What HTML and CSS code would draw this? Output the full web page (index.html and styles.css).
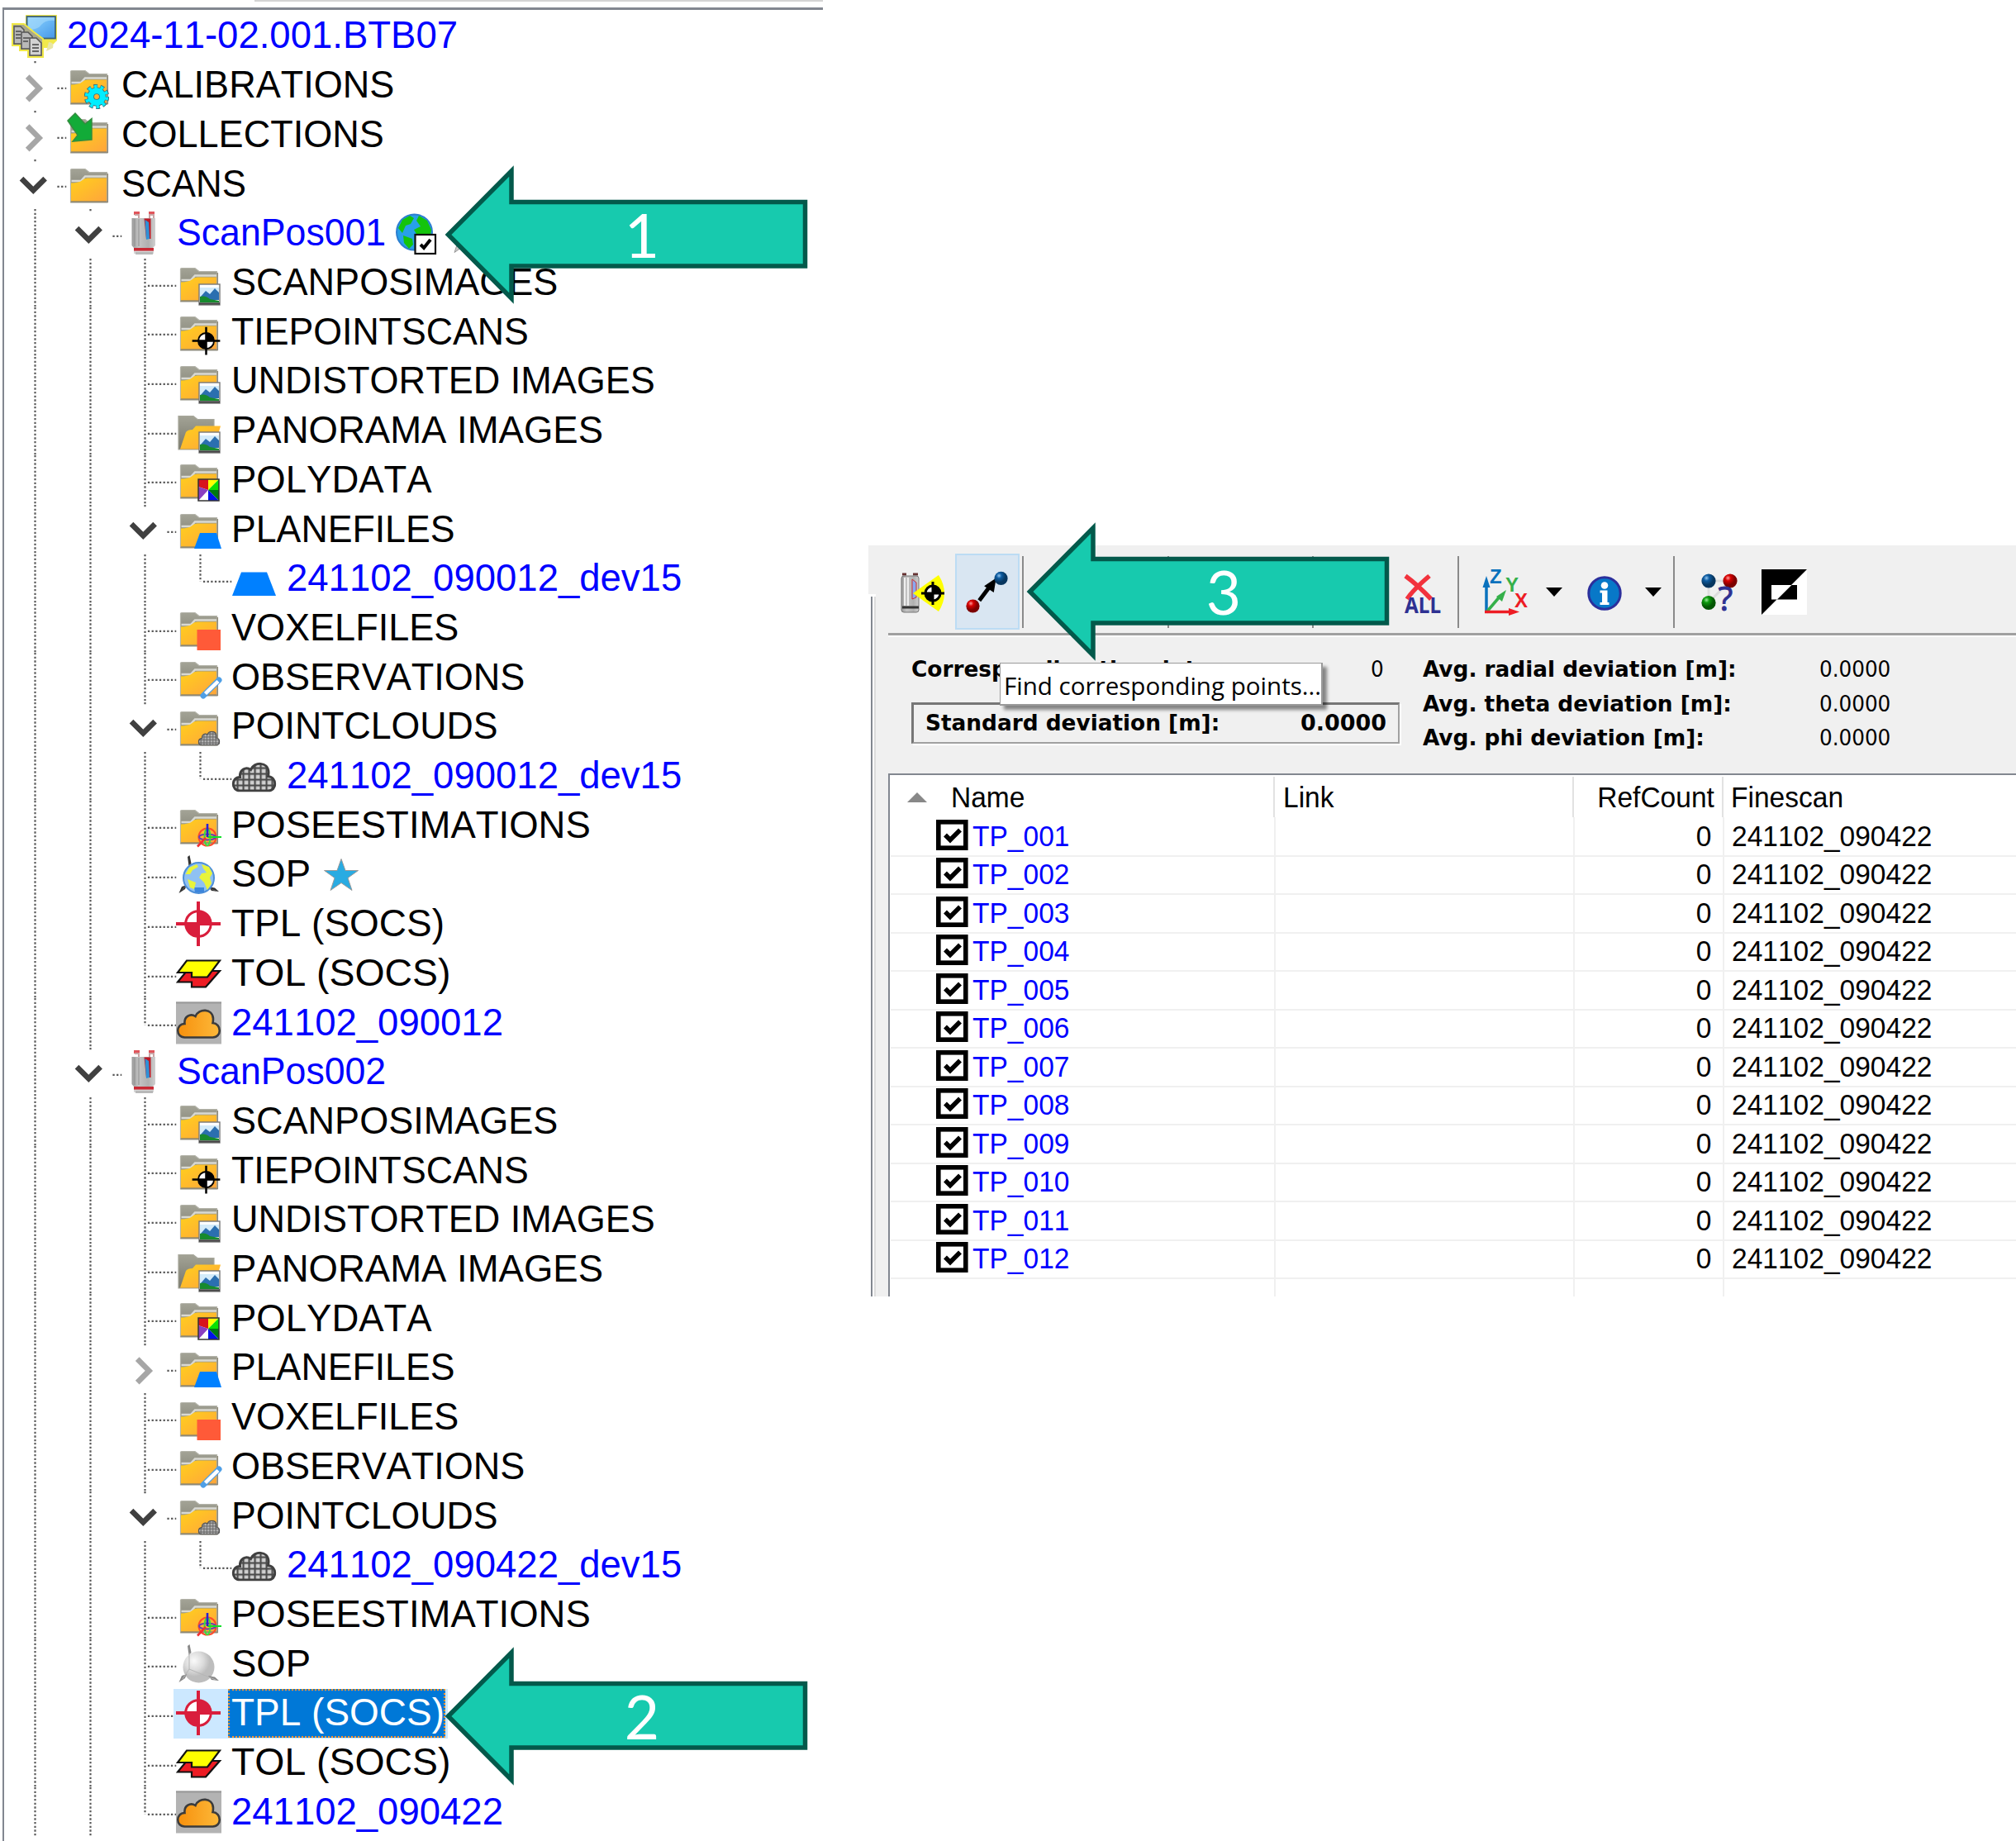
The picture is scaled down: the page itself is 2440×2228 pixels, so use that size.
FILE: index.html
```html
<!DOCTYPE html>
<html lang="en">
<head>
<meta charset="utf-8">
<title>2024-11-02.001.BTB07</title>
<link rel="stylesheet" href="styles.css">
</head>
<body>
<svg class="defs" width="0" height="0">
  <defs>
    <linearGradient id="gold" x1="0" y1="0" x2="1" y2="1"><stop offset="0" stop-color="#ffd01c"/><stop offset="1" stop-color="#ffa53c"/></linearGradient>
    <linearGradient id="gold2"><stop offset="0" stop-color="#f7900c"/><stop offset="1" stop-color="#fdb93a"/></linearGradient>
    <linearGradient id="tab" x1="0" y1="0" x2="0" y2="1"><stop offset="0" stop-color="#a3a396"/><stop offset="1" stop-color="#77776a"/></linearGradient>
    <linearGradient id="metal"><stop offset="0" stop-color="#9a9a9a"/><stop offset=".3" stop-color="#c4c4c4"/><stop offset=".7" stop-color="#b0b0b0"/><stop offset="1" stop-color="#cfcfcf"/></linearGradient>
    <linearGradient id="screen" x1="0" y1="0" x2="1" y2="1"><stop offset="0" stop-color="#8fd0fb"/><stop offset=".5" stop-color="#6bb8f5"/><stop offset="1" stop-color="#4596e6"/></linearGradient>
    <radialGradient id="ballR" cx=".35" cy=".3"><stop offset="0" stop-color="#ff9a9a"/><stop offset=".4" stop-color="#d60000"/><stop offset="1" stop-color="#7c0000"/></radialGradient>
    <radialGradient id="ballB" cx=".35" cy=".3"><stop offset="0" stop-color="#8fc4ef"/><stop offset=".4" stop-color="#0d5ba0"/><stop offset="1" stop-color="#07365f"/></radialGradient>
    <radialGradient id="ballG" cx=".35" cy=".3"><stop offset="0" stop-color="#9be89b"/><stop offset=".4" stop-color="#0c9a0c"/><stop offset="1" stop-color="#045604"/></radialGradient>
    <radialGradient id="ballW" cx=".35" cy=".3"><stop offset="0" stop-color="#fafafa"/><stop offset=".6" stop-color="#dcdcdc"/><stop offset="1" stop-color="#bdbdbd"/></radialGradient>
    <pattern id="mesh" width="7" height="7" patternUnits="userSpaceOnUse"><rect width="7" height="7" fill="#4c4c4c"/><rect x="1.2" y="1.2" width="4.8" height="4.8" fill="#d0d0d0"/></pattern>
    <pattern id="meshS" width="7.2" height="7.2" patternUnits="userSpaceOnUse"><rect width="7.2" height="7.2" fill="#666"/><rect x="1.4" y="1.4" width="5" height="5" fill="#b8b8b8"/></pattern>

    <symbol id="v" viewBox="0 0 66.5 59.71"><path class="dots" d="M28.5 0V59.71"/></symbol>
    <symbol id="tee" viewBox="0 0 66.5 59.71"><path class="dots" d="M28.5 0V59.71M31.9 32.9H66.5"/></symbol>
    <symbol id="ell" viewBox="0 0 66.5 59.71"><path class="dots" d="M28.5 0V33M31.9 32.9H66.5"/></symbol>
    <symbol id="open" viewBox="0 0 66.5 59.71"><path class="dots" d="M28.5 0V2.3M55.4 32.9H66.5"/><path d="M12 23.2L26.3 37.4L40.6 23.2" fill="none" stroke="#404040" stroke-width="6.6"/></symbol>
    <symbol id="shut" viewBox="0 0 66.5 59.71"><path class="dots" d="M28.5 0V2.3M55.4 32.9H66.5"/><path d="M19.2 18.7L33.4 32.9L19.2 47.1" fill="none" stroke="#a6a6a6" stroke-width="6.6"/></symbol>

    <symbol id="folder" viewBox="0 0 56 56">
      <path d="M5.5 50V10.5Q5.5 9.5 7 9.5H23L28 13.5H49.500V50Z" fill="url(#tab)" stroke="#b4b4aa" stroke-width="1.200"/>
      <path d="M6.500 24H18L23 18.500H49" fill="none" stroke="#d9d9d2" stroke-width="2.500"/>
      <path d="M6 26.500Q16 26 19 23.500Q22 20.500 26 20.500H49V48.500H6Z" fill="url(#gold)"/>
      <path d="M5.500 49.600H50.300V15" fill="none" stroke="#8f8a7a" stroke-width="1.500"/>
    </symbol>
    <symbol id="folderOpen" viewBox="0 0 56 56">
      <path d="M3 50V9.500H21L26 13.500H46V50Z" fill="url(#tab)" stroke="#a8a89c" stroke-width="1.200"/>
      <path d="M5 49.500L12 29Q14 26 20 26L24 21.500H54L46 49.500Z" fill="url(#gold)"/>
    </symbol>
    <symbol id="pic" viewBox="0 0 56 56">
      <rect x="28" y="29" width="25" height="25" fill="#fff" stroke="#777" stroke-width="1.400"/>
      <path d="M29 33H52V46H29Z" fill="#d3ebfa"/><path d="M29 45L36 37L41 41L47 34L52 39V48H29Z" fill="#2b6fb0"/>
      <path d="M29 44Q36 42 41 47L52 49V51H29Z" fill="#178a2e"/><path d="M28 52.500H53" stroke="#444" stroke-width="2.500"/>
    </symbol>
    <symbol id="cross" viewBox="-28 -28 56 56">
      <circle r="15.300" fill="#fff" stroke="currentColor" stroke-width="3"/><path d="M0 0V-15A15 15 0 0 1 15 0ZM0 0V15A15 15 0 0 1 -15 0Z" fill="currentColor"/>
      <path d="M0-27V27M-27 0H27" stroke="currentColor" stroke-width="4"/>
    </symbol>
    <symbol id="cloud" viewBox="0 0 54 36"><path d="M10 34.500C-1 34.500-1 18 10 18C9 9 17 5 23 9C27-1 44-1 44.500 12C44.500 14 44.500 15 44 17C55 18 55 34.500 44 34.500Z"/></symbol>
    <symbol id="gear" viewBox="-14 -14 28 28"><circle r="11.500" fill="none" stroke="#38727d" stroke-width="5.500" stroke-dasharray="4.200 3.030"/><circle r="6.800" fill="none" stroke="#38727d" stroke-width="8"/><circle r="11.200" fill="none" stroke="#0ef" stroke-width="4.200" stroke-dasharray="3.200 3.840" stroke-dashoffset="-.5"/><circle r="6.800" fill="none" stroke="#0ef" stroke-width="6.400"/></symbol>
    <symbol id="scanner" viewBox="0 0 56 56">
      <path d="M15 3H22M33 3H40" stroke="#e0555b" stroke-width="4"/><path d="M16 5H21V10H34V5H39V9" fill="none" stroke="#c9a5a5" stroke-width="2"/>
      <path d="M12.500 9H41V42L38 45H15L12.500 42Z" fill="url(#metal)"/><path d="M16 10V43M21 10V43" stroke="#8d8d8d" stroke-width="1"/>
      <path d="M27.500 9.500H35.500V34H30Z" fill="#c01825"/><path d="M28.500 11L33 14L34 34L30 35Z" fill="#2f90d6"/>
      <path d="M15 45H39V52H15Z" fill="#d6d6d6"/><path d="M15 46.800H39" stroke="#c92a35" stroke-width="3.600"/><path d="M17 51.500H38" stroke="#b9b9b9" stroke-width="3"/>
    </symbol>
    <symbol id="axes" viewBox="0 0 56 56"><path d="M15.500 17L14 6L16.500 4L18.500 14ZM3.500 50L7 42L13 40L11 45ZM52 48L43 47L39 42L47 43.500Z"/><path d="M16 14V34L8 46M16 34L48 47" fill="none" stroke="currentColor"/></symbol>
    <symbol id="star" viewBox="0 0 44 42"><path d="M22 1.500L27 15.500H42.500L30 24.500L35 39.500L22 30.500L9 39.500L14 24.500L1.500 15.500H17Z" stroke="#999" stroke-width="1"/></symbol>

    <symbol id="i-root" viewBox="0 0 56 56">
      <path d="M17 2H55V33L46 42H17Z" fill="#f1e94b"/><path d="M45 35Q52 35 50 42L42 46" fill="#e9e6a5"/>
      <rect x="18.500" y="4" width="34.500" height="26.500" fill="url(#screen)" stroke="#3f6272" stroke-width="1.800"/><path d="M20 20Q32 20 36 14Q41 8 52 9V5H20Z" fill="#a9dcfb" opacity=".6"/>
      <path d="M1 13H15L26 22L38 31V53H20V45H10V39H1Z" fill="#aaa88c" stroke="#f0e846" stroke-width="2"/>
      <g fill="#b9b9b9" stroke="#555" stroke-width="1.500"><path d="M3 16H11L15 20V37H3Z"/><path d="M12 23H20L25 28V43H12Z"/><path d="M22 30H30L36 36V51H22Z" fill="#d2d2d2"/></g>
      <path d="M5 22H12M5 26H12M5 30H11M14 30H22M14 34H20M25 38H33M25 42H33M25 46H33" stroke="#666" stroke-width="2"/>
    </symbol>
    <symbol id="i-cal" viewBox="0 0 56 56"><use href="#folder"/><use href="#gear" x="22" y="26" width="30" height="30"/></symbol>
    <symbol id="i-col" viewBox="0 0 56 56"><use href="#folder"/><path d="M2 11L11 2L23 15L31 8.500V34L8 36L14 28.500Z" fill="#12ab38" stroke="#338d3e" stroke-width="1.500"/></symbol>
    <symbol id="i-folder" viewBox="0 0 56 56"><use href="#folder"/></symbol>
    <symbol id="i-pic" viewBox="0 0 56 56"><use href="#folder"/><use href="#pic"/></symbol>
    <symbol id="i-pan" viewBox="0 0 56 56"><use href="#folderOpen"/><use href="#pic"/></symbol>
    <symbol id="i-tie" viewBox="0 0 56 56"><use href="#folder"/><use href="#cross" x="19" y="21" width="35" height="35" color="#000"/></symbol>
    <symbol id="i-poly" viewBox="0 0 56 56"><use href="#folder"/>
      <g transform="translate(27 27)"><rect width="25" height="26" fill="#fff"/><path d="M0 0H12V13L0 9Z" fill="#d8131c"/><path d="M12 0H25L12 13Z" fill="#ff0"/><path d="M25 0V13H12Z" fill="#0be000"/><path d="M25 13V26L12 13Z" fill="#007812"/><path d="M12 13L25 26H12Z" fill="#0010e8"/><path d="M0 9L12 13L0 26Z" fill="#8a3fc0"/><rect width="25" height="26" fill="none" stroke="#333" stroke-width="1.500"/></g></symbol>
    <symbol id="i-planes" viewBox="0 0 56 56"><use href="#folder"/><path d="M29 32H49L55 51H22Z" fill="#0080ff"/></symbol>
    <symbol id="i-plane" viewBox="0 0 56 56"><path d="M12 19.500H43L54 48H1Z" fill="#0080ff"/></symbol>
    <symbol id="i-vox" viewBox="0 0 56 56"><use href="#folder"/><rect x="25.500" y="30" width="28.500" height="25" fill="#ff5a38"/></symbol>
    <symbol id="i-obs" viewBox="0 0 56 56"><use href="#folder"/><path d="M33 50L52 31" stroke="#4f9fe6" stroke-width="7" stroke-linecap="round"/><path d="M35.500 47.500L51 32.500" stroke="#fff" stroke-width="4.500"/></symbol>
    <symbol id="i-pcs" viewBox="0 0 56 56"><use href="#folder"/><use href="#cloud" x="26.500" y="32.500" width="27" height="18" fill="url(#meshS)" stroke="#555" stroke-width="2.500"/></symbol>
    <symbol id="i-pc" viewBox="0 0 56 56"><use href="#cloud" x=".5" y="10.500" width="54" height="36" fill="url(#mesh)" stroke="#404040" stroke-width="3"/></symbol>
    <symbol id="i-pose" viewBox="0 0 56 56"><use href="#folder"/><g fill="none" stroke-width="2"><circle cx="38" cy="42" r="10.500" stroke="#ff4a2a"/><ellipse cx="38" cy="42" rx="10" ry="3.500" stroke="#6a3fb0"/><ellipse cx="38" cy="42" rx="3.500" ry="10" stroke="#3ddc3d"/><path d="M38 42H55" stroke="#12e02a"/><path d="M38 42V26" stroke="#2a1fd0" stroke-width="2.600"/><path d="M36 43L26 53.500" stroke="#f03030" stroke-width="2.600"/></g></symbol>
    <symbol id="i-sop" viewBox="0 0 56 56"><use href="#axes" fill="#333" color="#555"/><circle cx="27.500" cy="31.500" r="18.500" fill="#8fc1f2" stroke="#4d8fd8" stroke-width="2"/><path d="M22 43H34V49H23Z" fill="#3c86dc"/><g fill="#e8f43a"><path d="M11.500 27L16 19L25 15L27 18L20 22L17 27Z"/><path d="M31 15L40 18L44 26L41 31L43 38L38 46L34 37L28 31L31 26L37 25L33 20Z"/><path d="M14 33L24 37L22 45L17 43Z"/></g></symbol>
    <symbol id="i-sopg" viewBox="0 0 56 56"><circle cx="27.500" cy="31.500" r="19" fill="url(#ballW)"/><use href="#axes" fill="#888" color="#b5b5b5"/></symbol>
    <symbol id="i-tpl" viewBox="0 0 56 56"><use href="#cross" x="-1" y="-1" width="56" height="56" color="#d91e3c"/></symbol>
    <symbol id="i-tol" viewBox="0 0 56 56"><g stroke="#111" stroke-width="2.200"><path d="M13 25H53L36 44.500H19V38.500H2Z" fill="#ed1c24"/><path d="M13 12.500H53L38 32.500H19V27H2Z" fill="#ff0"/></g></symbol>
    <symbol id="i-scan" viewBox="0 0 56 56"><rect y="2.500" width="55" height="51" fill="#b3b3b3"/><path d="M0 3.500H55" stroke="#999" stroke-width="2"/><use href="#cloud" x=".5" y="11" width="54" height="36" fill="url(#gold2)" stroke="#3c3c3c" stroke-width="2.600"/></symbol>
    <symbol id="arrow" viewBox="0 0 442 168"><path d="M4.500 84L81 7V44.500H436.500V122H81V161Z" fill="#17caae" stroke="#03594b" stroke-width="5.500"/></symbol>
    <symbol id="chk" viewBox="0 0 39 37"><rect x="2.800" y="2.800" width="33" height="31.400" fill="#fff" stroke="#000" stroke-width="5.600"/><path d="M11 18.500L17 24.500L29 12.500" fill="none" stroke="#000" stroke-width="5.500"/></symbol>
  </defs>
</svg>

<main class="page">
  <section class="project">
    <div class="tabline"></div>
    <div class="tree">
      <div class="row"><div class="node link"><svg class="icon"><use href="#i-root"/></svg><span class="label"><b>2024-11-02.001.BTB07</b></span></div></div>
      <div class="row"><svg><use href="#shut"/></svg><div class="node"><svg class="icon"><use href="#i-cal"/></svg><span class="label snug"><b>CALIBRATIONS</b></span></div></div>
      <div class="row"><svg><use href="#shut"/></svg><div class="node"><svg class="icon"><use href="#i-col"/></svg><span class="label snug"><b>COLLECTIONS</b></span></div></div>
      <div class="row"><svg><use href="#open"/></svg><div class="node"><svg class="icon"><use href="#i-folder"/></svg><span class="label narrow"><b>SCANS</b></span></div></div>

      <div class="row"><svg><use href="#v"/></svg><svg><use href="#open"/></svg><div class="node link"><svg class="icon"><use href="#scanner"/></svg><span class="label tight"><b>ScanPos001</b></span>
        <svg class="globe" viewBox="0 0 50 50"><circle cx="22.500" cy="23" r="21.500" fill="#28a0e8" stroke="#2c7ed0" stroke-width="2"/><g fill="#14c40c"><path d="M3 18L8 8L17 3L22 6L18 13L12 15L8 24Z"/><path d="M28 3L38 9L43 20L42 27H26L22 20L30 16L25 9Z"/><path d="M9 27L20 31L21 38L16 43L10 36Z"/></g><rect x="23.500" y="26" width="24.500" height="23" fill="#fff" stroke="#111" stroke-width="2.200"/><path d="M30 38L34 42L42 32" fill="none" stroke="#000" stroke-width="4"/></svg>
        <svg class="star dim"><use href="#star"/></svg></div></div>
      <div class="row"><svg><use href="#v"/></svg><svg><use href="#v"/></svg><svg><use href="#tee"/></svg><div class="node"><svg class="icon"><use href="#i-pic"/></svg><span class="label snug"><b>SCANPOSIMAGES</b></span></div></div>
      <div class="row"><svg><use href="#v"/></svg><svg><use href="#v"/></svg><svg><use href="#tee"/></svg><div class="node"><svg class="icon"><use href="#i-tie"/></svg><span class="label tight"><b>TIEPOINTSCANS</b></span></div></div>
      <div class="row"><svg><use href="#v"/></svg><svg><use href="#v"/></svg><svg><use href="#tee"/></svg><div class="node"><svg class="icon"><use href="#i-pic"/></svg><span class="label snug"><b>UNDISTORTED IMAGES</b></span></div></div>
      <div class="row"><svg><use href="#v"/></svg><svg><use href="#v"/></svg><svg><use href="#tee"/></svg><div class="node"><svg class="icon"><use href="#i-pan"/></svg><span class="label"><b>PANORAMA IMAGES</b></span></div></div>
      <div class="row"><svg><use href="#v"/></svg><svg><use href="#v"/></svg><svg><use href="#tee"/></svg><div class="node"><svg class="icon"><use href="#i-poly"/></svg><span class="label"><b>POLYDATA</b></span></div></div>
      <div class="row"><svg><use href="#v"/></svg><svg><use href="#v"/></svg><svg><use href="#open"/></svg><div class="node"><svg class="icon"><use href="#i-planes"/></svg><span class="label tight"><b>PLANEFILES</b></span></div></div>
      <div class="row"><svg><use href="#v"/></svg><svg><use href="#v"/></svg><svg><use href="#v"/></svg><svg><use href="#ell"/></svg><div class="node link"><svg class="icon"><use href="#i-plane"/></svg><span class="label"><b>241102_090012_dev15</b></span></div></div>
      <div class="row"><svg><use href="#v"/></svg><svg><use href="#v"/></svg><svg><use href="#tee"/></svg><div class="node"><svg class="icon"><use href="#i-vox"/></svg><span class="label snug"><b>VOXELFILES</b></span></div></div>
      <div class="row"><svg><use href="#v"/></svg><svg><use href="#v"/></svg><svg><use href="#tee"/></svg><div class="node"><svg class="icon"><use href="#i-obs"/></svg><span class="label snug"><b>OBSERVATIONS</b></span></div></div>
      <div class="row"><svg><use href="#v"/></svg><svg><use href="#v"/></svg><svg><use href="#open"/></svg><div class="node"><svg class="icon"><use href="#i-pcs"/></svg><span class="label tight"><b>POINTCLOUDS</b></span></div></div>
      <div class="row"><svg><use href="#v"/></svg><svg><use href="#v"/></svg><svg><use href="#v"/></svg><svg><use href="#ell"/></svg><div class="node link"><svg class="icon"><use href="#i-pc"/></svg><span class="label"><b>241102_090012_dev15</b></span></div></div>
      <div class="row"><svg><use href="#v"/></svg><svg><use href="#v"/></svg><svg><use href="#tee"/></svg><div class="node"><svg class="icon"><use href="#i-pose"/></svg><span class="label"><b>POSEESTIMATIONS</b></span></div></div>
      <div class="row"><svg><use href="#v"/></svg><svg><use href="#v"/></svg><svg><use href="#tee"/></svg><div class="node"><svg class="icon"><use href="#i-sop"/></svg><span class="label"><b>SOP</b></span><svg class="star"><use href="#star"/></svg></div></div>
      <div class="row"><svg><use href="#v"/></svg><svg><use href="#v"/></svg><svg><use href="#tee"/></svg><div class="node"><svg class="icon"><use href="#i-tpl"/></svg><span class="label wide"><b>TPL (SOCS)</b></span></div></div>
      <div class="row"><svg><use href="#v"/></svg><svg><use href="#v"/></svg><svg><use href="#tee"/></svg><div class="node"><svg class="icon"><use href="#i-tol"/></svg><span class="label wider"><b>TOL (SOCS)</b></span></div></div>
      <div class="row"><svg><use href="#v"/></svg><svg><use href="#v"/></svg><svg><use href="#ell"/></svg><div class="node link"><svg class="icon"><use href="#i-scan"/></svg><span class="label"><b>241102_090012</b></span></div></div>

      <div class="row"><svg><use href="#v"/></svg><svg><use href="#open"/></svg><div class="node link"><svg class="icon"><use href="#scanner"/></svg><span class="label tight"><b>ScanPos002</b></span></div></div>
      <div class="row"><svg><use href="#v"/></svg><svg><use href="#v"/></svg><svg><use href="#tee"/></svg><div class="node"><svg class="icon"><use href="#i-pic"/></svg><span class="label snug"><b>SCANPOSIMAGES</b></span></div></div>
      <div class="row"><svg><use href="#v"/></svg><svg><use href="#v"/></svg><svg><use href="#tee"/></svg><div class="node"><svg class="icon"><use href="#i-tie"/></svg><span class="label tight"><b>TIEPOINTSCANS</b></span></div></div>
      <div class="row"><svg><use href="#v"/></svg><svg><use href="#v"/></svg><svg><use href="#tee"/></svg><div class="node"><svg class="icon"><use href="#i-pic"/></svg><span class="label snug"><b>UNDISTORTED IMAGES</b></span></div></div>
      <div class="row"><svg><use href="#v"/></svg><svg><use href="#v"/></svg><svg><use href="#tee"/></svg><div class="node"><svg class="icon"><use href="#i-pan"/></svg><span class="label"><b>PANORAMA IMAGES</b></span></div></div>
      <div class="row"><svg><use href="#v"/></svg><svg><use href="#v"/></svg><svg><use href="#tee"/></svg><div class="node"><svg class="icon"><use href="#i-poly"/></svg><span class="label"><b>POLYDATA</b></span></div></div>
      <div class="row"><svg><use href="#v"/></svg><svg><use href="#v"/></svg><svg><use href="#shut"/></svg><div class="node"><svg class="icon"><use href="#i-planes"/></svg><span class="label tight"><b>PLANEFILES</b></span></div></div>
      <div class="row"><svg><use href="#v"/></svg><svg><use href="#v"/></svg><svg><use href="#tee"/></svg><div class="node"><svg class="icon"><use href="#i-vox"/></svg><span class="label snug"><b>VOXELFILES</b></span></div></div>
      <div class="row"><svg><use href="#v"/></svg><svg><use href="#v"/></svg><svg><use href="#tee"/></svg><div class="node"><svg class="icon"><use href="#i-obs"/></svg><span class="label snug"><b>OBSERVATIONS</b></span></div></div>
      <div class="row"><svg><use href="#v"/></svg><svg><use href="#v"/></svg><svg><use href="#open"/></svg><div class="node"><svg class="icon"><use href="#i-pcs"/></svg><span class="label tight"><b>POINTCLOUDS</b></span></div></div>
      <div class="row"><svg><use href="#v"/></svg><svg><use href="#v"/></svg><svg><use href="#v"/></svg><svg><use href="#ell"/></svg><div class="node link"><svg class="icon"><use href="#i-pc"/></svg><span class="label"><b>241102_090422_dev15</b></span></div></div>
      <div class="row"><svg><use href="#v"/></svg><svg><use href="#v"/></svg><svg><use href="#tee"/></svg><div class="node"><svg class="icon"><use href="#i-pose"/></svg><span class="label"><b>POSEESTIMATIONS</b></span></div></div>
      <div class="row"><svg><use href="#v"/></svg><svg><use href="#v"/></svg><svg><use href="#tee"/></svg><div class="node"><svg class="icon"><use href="#i-sopg"/></svg><span class="label"><b>SOP</b></span></div></div>
      <div class="row"><svg><use href="#v"/></svg><svg><use href="#v"/></svg><svg><use href="#tee"/></svg><div class="node selected"><svg class="icon"><use href="#i-tpl"/></svg><span class="label wide"><b>TPL (SOCS)</b></span></div></div>
      <div class="row"><svg><use href="#v"/></svg><svg><use href="#v"/></svg><svg><use href="#tee"/></svg><div class="node"><svg class="icon"><use href="#i-tol"/></svg><span class="label wider"><b>TOL (SOCS)</b></span></div></div>
      <div class="row"><svg><use href="#v"/></svg><svg><use href="#v"/></svg><svg><use href="#ell"/></svg><div class="node link"><svg class="icon"><use href="#i-scan"/></svg><span class="label"><b>241102_090422</b></span></div></div>
    </div>
  </section>

  <section class="panel">
    <div class="edge"></div>
    <div class="content">
      <div class="toolbar">
        <svg class="t-scan" viewBox="0 0 56 52"><path d="M3 2H8M16 2H22" stroke="#633" stroke-width="3"/><rect x="2" y="4" width="21" height="44" rx="3" fill="url(#metal)" stroke="#777"/><path d="M6 6V40M10 6V40" stroke="#eee" stroke-width="2"/><path d="M15 8L20 12V30L15 32Z" fill="#8aa8ef" stroke="#c33"/><path d="M3 42H23" stroke="#333" stroke-width="3"/><path d="M16 25L47 3Q61 25 47 47Z" fill="#ff0"/><circle cx="40" cy="25" r="9" fill="#fff" stroke="#000" stroke-width="3"/><path d="M40 25V16A9 9 0 0 1 49 25ZM40 25V34A9 9 0 0 1 31 25Z"/><path d="M40 11V39M26 25H54" stroke="#000" stroke-width="3"/></svg>
        <div class="hot"><svg viewBox="0 0 76 90"><path d="M28 56L43 36" stroke="#000" stroke-width="5"/><path d="M49 28L46 46L34 38Z"/><circle cx="20" cy="63" r="8.300" fill="url(#ballR)"/><circle cx="55" cy="28.500" r="8.300" fill="url(#ballB)"/></svg></div>
        <i class="sep s1"></i><i class="sep s2"></i><i class="sep s3"></i>
        <svg class="t-all" viewBox="0 0 48 50"><path d="M3 3Q18 14 34 31M32 3Q12 20 5 31" fill="none" stroke="#f2323c" stroke-width="5.500"/><text x="2" y="47.500" textLength="44" lengthAdjust="spacingAndGlyphs" class="all">ALL</text></svg>
        <i class="sep s4"></i>
        <svg class="t-axes" viewBox="0 0 54 54"><path d="M5 50V16" stroke="#0a72bd" stroke-width="3.500"/><path d="M5 7L9.500 21H.5Z" fill="#0a72bd"/><path d="M5 51L22 31" stroke="#35b04a" stroke-width="3.500"/><path d="M29 24L24 38L17 32Z" fill="#35b04a"/><path d="M3 50.500H34" stroke="#ed1c24" stroke-width="3.500"/><path d="M45 50.500L32 46V55Z" fill="#ed1c24"/><text class="ax" x="9" y="16" fill="#0a72bd">Z</text><text class="ax" x="28" y="26" fill="#35b04a">Y</text><text class="ax" x="39" y="45" fill="#ed1c24">X</text></svg>
        <i class="drop d1"></i>
        <svg class="t-info" viewBox="0 0 42 42"><circle cx="21" cy="21" r="19.200" fill="#0878c8" stroke="#2b2f9c" stroke-width="3"/><circle cx="21" cy="11.500" r="4.300" fill="#fff"/><path d="M15.500 17.500H24.500V32H26.500V35H15.500V32H18V20.500H15.500Z" fill="#fff"/></svg>
        <i class="drop d2"></i>
        <i class="sep s5"></i>
        <svg class="t-find" viewBox="0 0 46 48"><path d="M10 10H36M10 10V36L36 10" fill="none" stroke="#ddd" stroke-width="3"/><circle cx="10" cy="10" r="8.600" fill="url(#ballB)"/><circle cx="36" cy="10" r="8.600" fill="url(#ballR)"/><circle cx="10" cy="36.500" r="8.600" fill="url(#ballG)"/><text class="q" x="21.500" y="46">?</text></svg>
        <svg class="t-bw" viewBox="0 0 55 55"><rect width="55" height="55" fill="#fff"/><path d="M0 0H55L0 55Z"/><path d="M12 19H36.500L19 36.500H12Z" fill="#fff"/><path d="M43 19V36.500H19L36.500 19Z"/></svg>
      </div>

      <div class="stats">
        <div class="stats-left">
          <div class="line"><b>Corresponding tiepoints:</b><span>0</span></div>
          <div class="boxed"><b>Standard deviation [m]:</b><b class="num">0.0000</b></div>
        </div>
        <div class="stats-right">
          <b>Avg. radial deviation [m]:</b><span>0.0000</span>
          <b>Avg. theta deviation [m]:</b><span>0.0000</span>
          <b>Avg. phi deviation [m]:</b><span>0.0000</span>
        </div>
      </div>

      <div class="table">
        <div class="thead"><div class="c1"><i class="sort"></i><b>Name</b></div><div class="c2"><b>Link</b></div><div class="c3"><b>RefCount</b></div><div class="c4"><b>Finescan</b></div></div>
        <div class="tr"><div class="c1"><svg class="check"><use href="#chk"/></svg><b>TP_001</b></div><div class="c2"></div><div class="c3"><b>0</b></div><div class="c4"><b>241102_090422</b></div></div>
        <div class="tr"><div class="c1"><svg class="check"><use href="#chk"/></svg><b>TP_002</b></div><div class="c2"></div><div class="c3"><b>0</b></div><div class="c4"><b>241102_090422</b></div></div>
        <div class="tr"><div class="c1"><svg class="check"><use href="#chk"/></svg><b>TP_003</b></div><div class="c2"></div><div class="c3"><b>0</b></div><div class="c4"><b>241102_090422</b></div></div>
        <div class="tr"><div class="c1"><svg class="check"><use href="#chk"/></svg><b>TP_004</b></div><div class="c2"></div><div class="c3"><b>0</b></div><div class="c4"><b>241102_090422</b></div></div>
        <div class="tr"><div class="c1"><svg class="check"><use href="#chk"/></svg><b>TP_005</b></div><div class="c2"></div><div class="c3"><b>0</b></div><div class="c4"><b>241102_090422</b></div></div>
        <div class="tr"><div class="c1"><svg class="check"><use href="#chk"/></svg><b>TP_006</b></div><div class="c2"></div><div class="c3"><b>0</b></div><div class="c4"><b>241102_090422</b></div></div>
        <div class="tr"><div class="c1"><svg class="check"><use href="#chk"/></svg><b>TP_007</b></div><div class="c2"></div><div class="c3"><b>0</b></div><div class="c4"><b>241102_090422</b></div></div>
        <div class="tr"><div class="c1"><svg class="check"><use href="#chk"/></svg><b>TP_008</b></div><div class="c2"></div><div class="c3"><b>0</b></div><div class="c4"><b>241102_090422</b></div></div>
        <div class="tr"><div class="c1"><svg class="check"><use href="#chk"/></svg><b>TP_009</b></div><div class="c2"></div><div class="c3"><b>0</b></div><div class="c4"><b>241102_090422</b></div></div>
        <div class="tr"><div class="c1"><svg class="check"><use href="#chk"/></svg><b>TP_010</b></div><div class="c2"></div><div class="c3"><b>0</b></div><div class="c4"><b>241102_090422</b></div></div>
        <div class="tr"><div class="c1"><svg class="check"><use href="#chk"/></svg><b>TP_011</b></div><div class="c2"></div><div class="c3"><b>0</b></div><div class="c4"><b>241102_090422</b></div></div>
        <div class="tr"><div class="c1"><svg class="check"><use href="#chk"/></svg><b>TP_012</b></div><div class="c2"></div><div class="c3"><b>0</b></div><div class="c4"><b>241102_090422</b></div></div>
        <div class="tr rest"><div class="c1"></div><div class="c2"></div><div class="c3"></div><div class="c4"></div></div>
      </div>
    </div>
  </section>

  <div class="tooltip"><span>Find corresponding points...</span></div>
  <div class="callout a1"><svg><use href="#arrow"/></svg><span>1</span></div>
  <div class="callout a2"><svg><use href="#arrow"/></svg><span>2</span></div>
  <div class="callout a3"><svg><use href="#arrow"/></svg><span>3</span></div>
</main>
</body>
</html>
```
FILE: styles.css
```css
* { box-sizing: border-box; }
body { margin: 0; background: #fff; font-family: "Liberation Sans", Arial, sans-serif; font-kerning: none; color: #000; }
b, i { font-weight: normal; font-style: normal; }
svg { display: block; flex: none; overflow: visible; }
.defs { position: absolute; }
.page { position: relative; width: 2440px; height: 2228px; overflow: hidden; display: flex; align-items: flex-start; }

/* project tree */
.project { width: 996px; height: 2228px; flex: none; overflow: hidden; }
.tabline { height: 2px; margin: 0 0 7px 308px; background: #d4d4d4; }
.tree { margin-left: 3px; height: 2240px; border: solid #828790; border-width: 3px 0 0 2px; padding: 2.150px 0 0 9px; }
.row { display: flex; height: 59.710px; }
.row > svg { width: 66.500px; height: 59.710px; }
.dots { fill: none; stroke: #5a5a5a; stroke-width: 2.200; stroke-dasharray: 2.300 2.367; }
.node { display: flex; align-items: center; height: 59.710px; }
.icon { width: 56px; height: 56px; margin: 0 6.500px 0 -.5px; }
.label { height: 59px; line-height: 56px; padding-left: 4.500px; font-size: 47px; white-space: nowrap; }
.label b { display: inline-block; transform: scaleX(.968); transform-origin: 0 0; }
.snug b { transform: scaleX(.958); }
.tight b { transform: scaleX(.950); }
.narrow b { transform: scaleX(.932); }
.wide b { transform: scaleX(.978); }
.wider b { transform: scaleX(.987); }
.link { color: #00f; }
.selected { background: #cce8ff; box-shadow: -4px 0 #cce8ff, 3px 0 #cce8ff; }
.selected .label { width: 263px; background: #0078d7; color: #fff; outline: 2px dotted #ff9428; outline-offset: -2px; }
.globe { width: 50px; height: 50px; margin-left: -1px; }
.star { width: 44px; height: 42px; margin-left: 12px; fill: #29abe2; }
.star.dim { fill: #c8c8c8; margin-top: 8px; }

/* tie point panel */
.panel { margin: 660px 0 0 55px; width: 1389px; height: 909px; background: #f0f0f0; display: flex; overflow: hidden; }
.edge { width: 9px; height: 850px; margin-top: 59px; flex: none; background: linear-gradient(90deg, #fff 0 3px, #828790 3px 5px, #fff 5px 7px, #dcdcdc 7px 9px); border-top: 3px solid #fff; }
.content { margin-left: 15px; width: 1365px; flex: none; }
.toolbar { height: 111px; display: flex; padding-top: 10px; border-bottom: 2px solid #fff; box-shadow: inset 0 -3px #a0a0a0; }
.t-scan { width: 56px; height: 52px; margin: 23px 0 0 14px; }
.hot { width: 78px; height: 92px; margin-left: 11px; background: #d9e6f2; border: 2px solid #bcdcf4; }
.hot svg { width: 74px; height: 88px; }
.sep { width: 2px; height: 87px; margin-top: 3px; background: #8a8a8a; flex: none; }
.s1 { margin-left: 3px; }
.s2, .s3 { margin-left: 173.500px; }
.t-all { width: 48px; height: 50px; margin: 24px 0 0 107.500px; }
.all { font: bold 27px "Noto Sans", sans-serif; fill: #2e3192; }
.s4 { margin-left: 18px; }
.t-axes { width: 54px; height: 54px; margin: 20px 0 0 28px; }
.ax { font: bold 24px "Liberation Sans Narrow", "Liberation Sans", sans-serif; }
.drop { width: 0; height: 0; flex: none; margin-top: 41px; border: solid transparent; border-width: 11px 10px 0; border-top-color: #000; }
.d1 { margin-left: 23px; }
.t-info { width: 42px; height: 42px; margin: 27px 0 0 30px; }
.d2 { margin-left: 28px; }
.s5 { margin-left: 14px; }
.t-find { width: 46px; height: 48px; margin: 23px 0 0 31px; }
.q { font: 41px "Open Sans", sans-serif; fill: #2e3192; stroke: #2e3192; }
.t-bw { width: 55px; height: 55px; margin: 19px 0 0 28px; }

.stats { display: flex; height: 165px; padding: 18px 0 0 28px; font: 26.500px/41.500px "DejaVu Sans Condensed", "DejaVu Sans", sans-serif; font-stretch: condensed; }
.stats b { font-weight: bold; display: inline-block; white-space: nowrap; transform: scaleX(1.105); transform-origin: 0 50%; }
.stats b.num { transform: scaleX(1.13); transform-origin: 100% 50%; }
.stats span { display: inline-block; transform: scaleX(1.035); transform-origin: 0 50%; }
.stats-left { width: 591px; }
.line { display: flex; justify-content: space-between; padding-right: 20px; }
.boxed { margin-top: 19px; height: 50px; display: flex; justify-content: space-between; line-height: 43px; padding: 0 14px 0 14px; border: solid; border-width: 3px 2px 2px 3px; border-color: #767676 #a0a0a0 #a0a0a0 #767676; box-shadow: 2px 2px #fff; }
.stats-right { margin-left: 28px; display: grid; grid-template-columns: 480px auto; grid-auto-rows: 41.500px; justify-items: start; }

.table { height: 633px; width: 1365px; background: #fff; border: solid #828790; border-width: 2px 0 0 2px; font-size: 35px; }
.table b { display: inline-block; transform: scaleX(.958); transform-origin: 0 0; }
.thead, .tr { display: grid; grid-template-columns: 466px 361.500px 181px 1fr; }
.thead { height: 51px; }
.tr { height: 46.490px; }
.thead > div { margin: 2px 0 0; padding-top: 5px; line-height: 40px; border-right: 2px solid #e2e2e2; white-space: nowrap; }
.tr > div { border-right: 2px solid #f0f0f0; border-bottom: 2px solid #f0f0f0; line-height: 46px; white-space: nowrap; }
.tr { padding-left: 1px; }
.thead .c4, .tr .c4 { border-right: 0; }
.c1 { display: flex; color: #00f; }
.thead .c1 { color: #000; }
.sort { width: 0; height: 0; margin: 14px 29px 0 21px; border: solid transparent; border-width: 0 12px 12px; border-bottom-color: #888; }
.check { width: 39px; height: 37px; margin: 3px 5px 0 55px; }
.c2 { padding-left: 10px; }
.c3 { text-align: right; padding-right: 9px; }
.tr .c3 { padding-right: 13px; }
.table .c3 b { transform-origin: 100% 0; }
.c4 { padding-left: 9px; }
.rest > div { height: 30px; border-bottom: 0; }

.tooltip { position: absolute; left: 1210px; top: 802px; width: 391px; height: 52px; background: #fff; border: solid #9a9a9a; border-width: 1px 2px 2px 1px; box-shadow: 5px 5px 4px rgba(0, 0, 0, .45); padding-left: 4px; font: 30px/54px "Open Sans", sans-serif; white-space: nowrap; }
.tooltip span { display: inline-block; transform: scaleX(.985); transform-origin: 0 0; }

/* numbered callouts */
.callout { position: absolute; width: 442px; height: 168px; }
.callout svg { width: 442px; height: 168px; }
.callout span { position: absolute; left: 0; top: 40px; width: 478px; text-align: center; color: #fff; font: 73px/88px Lato, sans-serif; }
.a1 { left: 538px; top: 200px; }
.a2 { left: 538px; top: 1993px; }
.a3 { left: 1242px; top: 632px; }
```
